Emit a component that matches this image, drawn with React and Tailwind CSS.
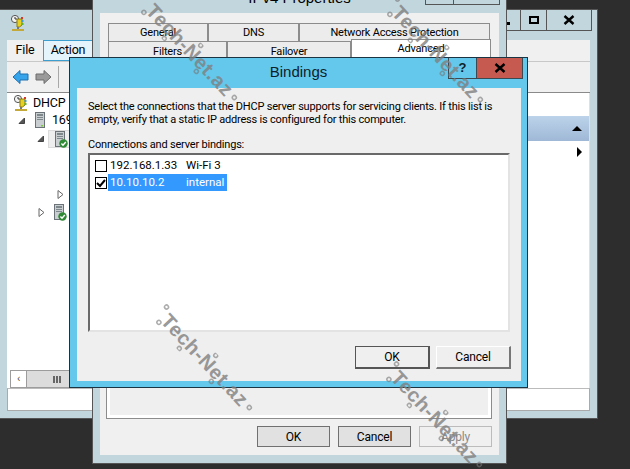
import React from 'react';

const font = "font-['Roboto',sans-serif]";

const CloseGlyph = () => (
  <svg width="12" height="10" viewBox="0 0 12 10">
    <path d="M1.5 1 L10.5 9 M10.5 1 L1.5 9" stroke="#000" strokeWidth="2.4" />
  </svg>
);

const ServerIcon = ({ check }) => (
  <svg width="13" height="17" viewBox="0 0 13 17" className="shrink-0">
    <rect x="0.5" y="0.5" width="9" height="15" fill="#c9ced1" stroke="#6b7378" />
    <rect x="2" y="2" width="6" height="2" fill="#7e878c" />
    <rect x="2" y="5" width="6" height="1" fill="#7e878c" />
    <rect x="2" y="7" width="6" height="1" fill="#7e878c" />
    {check ? (
      <>
        <circle cx="8.5" cy="12.5" r="4.2" fill="#2f8a35" />
        <path d="M6.4 12.5 L8 14.2 L10.8 11" fill="none" stroke="#fff" strokeWidth="1.4" />
      </>
    ) : (
      <rect x="6" y="13" width="2" height="1.5" fill="#7ccb3c" />
    )}
  </svg>
);

const DhcpIcon = () => (
  <svg width="16" height="17" viewBox="0 0 16 17" className="shrink-0">
    <circle cx="5" cy="4" r="3.6" fill="#f4f4f4" stroke="#555" />
    <path d="M5 2 V4 H7" fill="none" stroke="#333" />
    <path d="M7 4 H12 V10 L9.5 12 H7 Z" fill="#e8d020" stroke="#8a7a10" />
    <rect x="11" y="2" width="2" height="2" fill="#d9352b" />
    <rect x="11.5" y="5" width="2" height="2" fill="#3f9bd8" />
    <rect x="11.5" y="8" width="2" height="2" fill="#5cb531" />
    <path d="M8 12 V14" stroke="#777" strokeWidth="2" />
    <rect x="2" y="14" width="12" height="2" fill="#c4a93a" />
  </svg>
);

const Arrow = ({ dir, fill, stroke }) => (
  <svg width="17" height="16" viewBox="0 0 17 16" className="shrink-0">
    <path
      d={dir === 'left' ? 'M1 8 L8 1.5 V5 H16 V11 H8 V14.5 Z' : 'M16 8 L9 1.5 V5 H1 V11 H9 V14.5 Z'}
      fill={fill}
      stroke={stroke}
    />
  </svg>
);

const Expander = ({ open }) => (
  <svg width="7" height="9" viewBox="0 0 7 9" className="shrink-0">
    {open ? (
      <path d="M6.5 2 V7.5 H1 Z" fill="#555" stroke="#444" />
    ) : (
      <path d="M1 0.5 L6 4.5 L1 8.5 Z" fill="#fff" stroke="#666" />
    )}
  </svg>
);

// watermark laid over the windows, text is stretched across a 45deg diagonal
const Watermark = ({ cls }) => (
  <div className={`absolute w-[136px] h-[26px] rotate-[47deg] pointer-events-none ${cls}`}>
    <div className="flex items-center justify-center h-full font-['Liberation_Sans',sans-serif] font-bold text-[20px] tracking-[0.6px] text-[#808080] opacity-80 whitespace-nowrap">
      Tech-Net.az
    </div>
    <svg width="136" height="26" viewBox="0 0 136 26" className="absolute left-0 top-0 opacity-60">
      <g fill="none" stroke="#777" strokeWidth="1.5">
        <circle cx="3" cy="5" r="2" />
        <circle cx="9" cy="21" r="2" />
        <circle cx="42" cy="24" r="2" />
        <circle cx="72" cy="2" r="2" />
        <circle cx="88" cy="23" r="2" />
        <circle cx="133" cy="13" r="2" />
      </g>
    </svg>
  </div>
);

const TabCell = ({ label, w, active, cls = '' }) => (
  <div
    className={`flex items-center justify-center border-t border-l border-r border-[#8c8c8c] ${w} ${cls} ${
      active ? 'bg-white -mt-[2px] relative' : 'bg-[#ececec]'
    }`}
  >
    {label}
  </div>
);

const WinButton = ({ label, w, cls }) => (
  <div className={`flex items-center justify-center ${w} ${cls}`}>{label}</div>
);

export default function App() {
  return (
    <div className={`relative w-[630px] h-[469px] overflow-hidden bg-[#2d2d2d] text-black ${font} text-[11px] tracking-[-0.2px]`}>
      {/* DHCP console behind everything */}
      <div className="absolute -left-px top-[9px] w-[599px] h-[410px] border border-[#555] bg-[#c2d6dd] flex flex-col">
        <div className="relative h-[30px] shrink-0 pl-[10px] pt-[5px]">
          <DhcpIcon />
          <div className="absolute right-[5px] top-0 flex h-[21px] border-b border-r border-[#555]">
            <div className="w-[27px] border-l border-[#555] flex items-end justify-center pb-[5px]">
              <div className="w-[6px] h-[3px] bg-black" />
            </div>
            <div className="w-[26px] border-l border-[#555] flex items-center justify-center">
              <div className="w-[10px] h-[8px] border-2 border-black" />
            </div>
            <div className="w-[45px] border-l border-[#555] flex items-center justify-center">
              <CloseGlyph />
            </div>
          </div>
        </div>
        <div className="mx-[7px] flex flex-col">
          <div className="h-[22px] flex items-stretch bg-[#f0f0f0] text-[12.5px] border-b border-[#c8c8c8]">
            <div className="w-[36px] flex items-center justify-center">File</div>
            <div className="w-[50px] flex items-center justify-center bg-[#e5f3fb] border border-[#3c9ecf]">Action</div>
          </div>
          <div className="h-[30px] flex items-center gap-[6px] pl-[5px] bg-[#f0f0f0]">
            <Arrow dir="left" fill="#35a4ea" stroke="#1c6fb0" />
            <Arrow dir="right" fill="#9a9a9a" stroke="#6d6d6d" />
            <div className="w-px h-[22px] bg-[#a8a8a8]" />
            <div className="ml-[9px] w-[8px] h-[12px] bg-[#e8cf86] border border-[#b89c4e]" />
          </div>
          <div className="h-[297px] flex bg-white border-t border-[#8a8a8a]">
            <div className="w-[262px] flex flex-col text-[12.5px]">
              <div className="h-[18px] mt-[1px] pl-[6px] flex items-center gap-[4px]">
                <DhcpIcon />
                <span>DHCP</span>
              </div>
              <div className="h-[17px] pl-[11px] flex items-center gap-[10px]">
                <Expander open />
                <ServerIcon />
                <span className="-ml-[6px]">169</span>
              </div>
              <div className="h-[19px] pl-[30px] flex items-center gap-[4px]">
                <Expander open />
                <div className="w-[22px] h-[18px] bg-[#eeeeee] border border-[#dcdcdc] pl-[6px]">
                  <ServerIcon check />
                </div>
              </div>
              <div className="h-[55px] pl-[50px] flex items-end pb-[4px]">
                <Expander />
              </div>
              <div className="h-[18px] pl-[31px] flex items-center gap-[9px]">
                <Expander />
                <ServerIcon check />
              </div>
              <div className="flex-1" />
              <div className="h-[18px] ml-[3px] mb-[1px] flex bg-[#dcdcdc] border border-[#9c9c9c]">
                <div className="w-[16px] bg-white border-r border-[#9c9c9c] flex items-center justify-center text-[#555] text-[11px]">‹</div>
                <div className="flex-1 pl-[26px] flex items-center gap-[1px]">
                  <div className="w-[2px] h-[7px] bg-[#666]" />
                  <div className="w-[2px] h-[7px] bg-[#666]" />
                  <div className="w-[2px] h-[7px] bg-[#666]" />
                </div>
              </div>
            </div>
            <div className="flex-1 flex flex-col border-r border-[#e0e0e0]">
              <div className="h-[23px]" />
              <div className="h-[25px] flex items-center justify-end pr-[7px] bg-linear-to-b from-[#bcd3ea] to-[#9fb8d6]">
                <div className="w-0 h-0 border-l-[5px] border-r-[5px] border-b-[5px] border-l-transparent border-r-transparent border-b-black" />
              </div>
              <div className="flex justify-end pr-[7px] pt-[6px]">
                <div className="w-0 h-0 border-t-[5px] border-b-[5px] border-l-[5px] border-t-transparent border-b-transparent border-l-black" />
              </div>
            </div>
          </div>
          <div className="h-[23px] bg-white border border-[#aaa] border-t-[#bbb] mt-[-1px]" />
        </div>
      </div>

      {/* IPv4 properties sheet */}
      <div className="absolute left-[92px] -top-[17px] w-[415px] h-[481px] border border-[#555] bg-[#c2d6dd] flex flex-col">
        <div className="relative h-[29px] shrink-0 flex items-center justify-center text-[15px] tracking-normal font-['Liberation_Sans',sans-serif]">
          IPv4 Properties
          <div className="absolute right-[6px] top-0 h-[21px] w-[75px] flex border border-t-0 border-[#555]">
            <div className="w-[28px] border-r border-[#555]" />
          </div>
        </div>
        <div className="mx-[7px] h-[442px] bg-[#f0f0f0] flex flex-col pt-[10px] pl-[6px] pr-[7px]">
          <div className="ml-[2px] h-[18px] flex">
            <TabCell label="General" w="w-[100px]" cls="pt-[2px]" />
            <TabCell label="DNS" w="w-[91px]" cls="pt-[2px]" />
            <TabCell label="Network Access Protection" w="w-[191px]" cls="pt-[2px]" />
          </div>
          <div className="ml-[2px] h-[16px] flex">
            <TabCell label="Filters" w="w-[119px]" cls="pt-[5px]" />
            <TabCell label="Failover" w="w-[124px]" cls="pt-[5px]" />
            <TabCell label="Advanced" w="w-[140px] h-[18px]" cls="pt-[2px]" active />
          </div>
          <div className="h-[362px] bg-[#efefef] border border-[#8c8c8c] shadow-[inset_0_0_0_3px_#fff]" />
          <div className="mt-[7px] flex justify-end gap-[8px] text-[12px]">
            <WinButton label="OK" w="w-[73px] h-[21px]" cls="bg-[#e1e1e1] border border-[#707070]" />
            <WinButton label="Cancel" w="w-[73px] h-[21px]" cls="bg-[#e1e1e1] border border-[#707070]" />
            <WinButton label="Apply" w="w-[73px] h-[21px]" cls="bg-[#f0f0f0] border border-[#bcbcbc] text-[#8a8a8a]" />
          </div>
        </div>
      </div>

      {/* Bindings dialog */}
      <div className="absolute left-[69px] top-[57px] w-[459px] h-[331px] border border-[#1b3443] bg-[#63c8eb] flex flex-col">
        <div className="relative h-[30px] shrink-0 flex items-center justify-center text-[15px] tracking-normal text-[#10202a] pb-[1px] font-['Liberation_Sans',sans-serif]">
          Bindings
          <div className="absolute right-[4px] top-0 h-[21px] flex border-b border-[#3a4a52]">
            <div className="w-[28px] border-l border-[#3a4a52] flex items-center justify-center font-bold text-[13px]">?</div>
            <div className="w-[47px] border-x border-[#3a4a52] bg-[#c75a50] flex items-center justify-center">
              <CloseGlyph />
            </div>
          </div>
        </div>
        <div className="ml-[7px] mr-[6px] h-[293px] bg-[#efefef] px-[11px] pt-[12px] flex flex-col">
          <div className="leading-[13px] whitespace-nowrap">
            <p>Select the connections that the DHCP server supports for servicing clients. If this list is</p>
            <p>empty, verify that a static IP address is configured for this computer.</p>
          </div>
          <p className="mt-[12px] leading-[13px]">Connections and server bindings:</p>
          <div className="mt-[2px] h-[179px] border-2 border-t-[#696969] border-l-[#696969] border-r-[#e3e3e3] border-b-[#e3e3e3] bg-white pt-[2px] text-[11.5px] tracking-normal">
            <div className="h-[17px] flex items-center">
              <div className="ml-[5px] w-[12px] h-[12px] border border-black shrink-0" />
              <div className="w-[119px] pl-[3px] flex">
                <span className="w-[76px]">192.168.1.33</span>
                <span>Wi-Fi 3</span>
              </div>
            </div>
            <div className="h-[17px] flex items-center">
              <div className="ml-[5px] w-[12px] h-[12px] border border-black shrink-0 flex items-center justify-center">
                <svg width="10" height="10" viewBox="0 0 10 10">
                  <path d="M1 5 L4 8 L9 2" fill="none" stroke="#000" strokeWidth="2" />
                </svg>
              </div>
              <div className="w-[119px] h-[17px] pl-[2px] ml-px bg-[#3399ff] text-white flex items-center">
                <span className="w-[76px]">10.10.10.2</span>
                <span>internal</span>
              </div>
            </div>
          </div>
          <div className="mt-[14px] -mr-px flex justify-end gap-[6px] text-[12px]">
            <WinButton label="OK" w="w-[75px] h-[23px]" cls="bg-[#efefef] border border-[#555] border-r-2 border-b-2" />
            <WinButton label="Cancel" w="w-[75px] h-[23px]" cls="bg-[#efefef] border border-white border-r-2 border-b-2 border-r-[#777] border-b-[#777]" />
          </div>
        </div>
      </div>

      <Watermark cls="left-[122px] top-[37px]" />
      <Watermark cls="left-[368px] top-[39px]" />
      <Watermark cls="left-[137px] top-[347px]" />
      <Watermark cls="left-[367px] top-[404px]" />
    </div>
  );
}
